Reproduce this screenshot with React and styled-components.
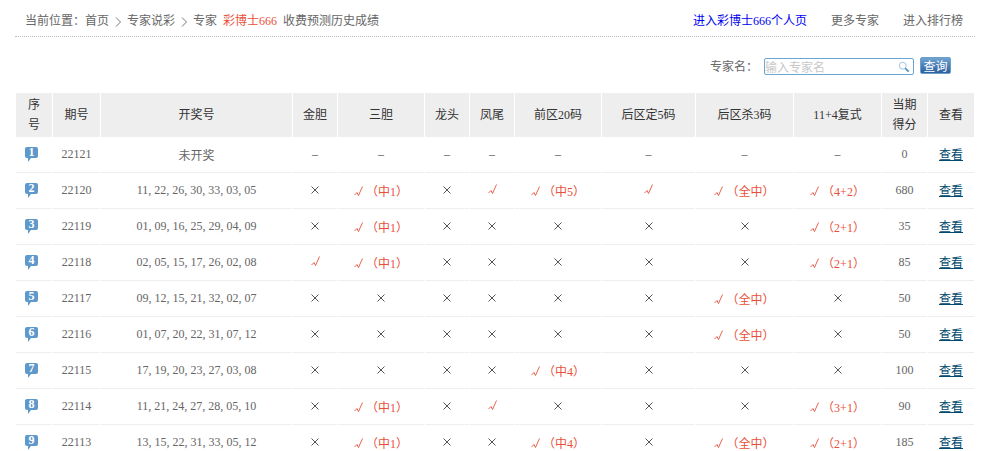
import React from "react";
import styled, { createGlobalStyle } from "styled-components";

const Global = createGlobalStyle`
  html, body { margin: 0; padding: 0; height: 451px; overflow: hidden; background: #fff; }
  body { font: 12px "Liberation Serif", "Noto Sans CJK SC", sans-serif; color: #666; }
`;

const Page = styled.div`
  width: 960px;
  margin-left: 15px;
`;

const TopBar = styled.div`
  height: 37px;
  box-sizing: border-box;
  padding: 14px 12px 0 10px;
  border-bottom: 1px dotted #bbb;
  display: flex;
  justify-content: space-between;
  align-items: flex-start;
  line-height: 15px;
`;

const Crumbs = styled.div`
  display: flex;
  gap: 6px;
`;

const Location = styled.span`
  margin-right: -6px;
`;

const Sep = styled.span`
  width: 6px;
  height: 15px;
  display: flex;
  justify-content: center;
  align-items: center;
`;

const Red = styled.span`
  color: #e8503a;
`;

const TopLinks = styled.div`
  display: flex;
  gap: 24px;
`;

const TopLink = styled.a`
  color: ${(p) => (p.$active ? "#0000f0" : "#666")};
  text-decoration: none;
`;

const SearchRow = styled.div`
  height: 56px;
  box-sizing: border-box;
  padding: 20px 24px 0 0;
  display: flex;
  justify-content: flex-end;
  align-items: flex-start;
`;

const SearchLabel = styled.label`
  line-height: 18px;
  margin-top: 1px;
  margin-right: 6px;
  white-space: nowrap;
`;

const SearchBox = styled.div`
  width: 150px;
  height: 17px;
  margin-top: 1px;
  box-sizing: border-box;
  border: 1px solid #6aa6d3;
  border-radius: 2px;
  display: flex;
  align-items: center;
  padding-right: 3px;
`;

const SearchInput = styled.input`
  flex: 1;
  min-width: 0;
  border: 0;
  outline: 0;
  padding: 0;
  margin: 0;
  height: 15px;
  background: transparent;
  font: 12px "Noto Sans CJK SC", sans-serif;
  &::placeholder {
    color: #c8c8c8;
    opacity: 1;
  }
`;

const SearchButton = styled.button`
  width: 31px;
  height: 17px;
  margin-left: 6px;
  padding: 0;
  border: 1px solid #6a9fca;
  border-radius: 2px;
  background: linear-gradient(#6fa3d0, #2c5f9c);
  color: #fff;
  font: 12px/14px "Noto Sans CJK SC", sans-serif;
`;

const Table = styled.table`
  width: 960px;
  table-layout: fixed;
  border-collapse: separate;
  border-spacing: 1px 0;
`;

const Th = styled.th`
  height: 44px;
  padding: 0;
  background: #eee;
  color: #333;
  font-weight: normal;
  line-height: 20px;
`;

const Td = styled.td`
  height: 36px;
  box-sizing: border-box;
  padding: 0;
  text-align: center;
  border-bottom: 1px solid #eee;
`;

const Comma = styled.span`
  margin-right: 3px;
`;

const Bubble = styled.span`
  position: relative;
  display: block;
  width: 13px;
  height: 11px;
  margin: 0 0 4px 9px;
  border-radius: 2px;
  background: #5f98ca;
  color: #fff;
  font: bold 12px/11px "Liberation Serif", serif;
  text-align: center;
  &::after {
    content: "";
    position: absolute;
    left: 3px;
    top: 11px;
    border-style: solid;
    border-width: 4px 3px 0 0;
    border-color: #5f98ca transparent transparent transparent;
  }
`;

const Mark = styled.svg`
  display: inline-block;
  vertical-align: 0;
  fill: none;
`;

const Hit = styled.span`
  color: #e8503a;
  white-space: nowrap;
`;

const CheckGap = styled.span`
  margin-left: 3px;
`;

const ViewLink = styled.a`
  color: #004a6e;
  text-decoration: underline;
  font-family: "Noto Sans CJK SC", sans-serif;
  vertical-align: 1px;
`;

const Dash = styled.span`
  color: #555;
`;

const Check = () => (
  <Mark width="9" height="10" viewBox="0 0 9 10" stroke="#e8503a" strokeWidth="0.9">
    <polyline points="0.5,9 3,6.5 4.5,9.5 8.5,0.5" />
  </Mark>
);

const Cross = () => (
  <Mark width="8" height="8" viewBox="0 0 8 8" stroke="#555">
    <path d="M0.5 0.5 L7.5 7.5 M7.5 0.5 L0.5 7.5" />
  </Mark>
);

const columns = [36, 47, 191, 44, 86, 44, 44, 86, 93, 97, 87, 45, 46];
const headers = [
  ["序", "号"], ["期号"], ["开奖号"], ["金胆"], ["三胆"], ["龙头"], ["凤尾"],
  ["前区20码"], ["后区定5码"], ["后区杀3码"], ["11+4复式"], ["当期", "得分"], ["查看"],
];

const X = "x";
const D = "-";
const rows = [
  ["22121", "未开奖", [D, D, D, D, D, D, D, D], "0"],
  ["22120", "11,22,26,30,33,03,05", [X, "（中1）", X, "", "（中5）", "", "（全中）", "（4+2）"], "680"],
  ["22119", "01,09,16,25,29,04,09", [X, "（中1）", X, X, X, X, X, "（2+1）"], "35"],
  ["22118", "02,05,15,17,26,02,08", ["", "（中1）", X, X, X, X, X, "（2+1）"], "85"],
  ["22117", "09,12,15,21,32,02,07", [X, X, X, X, X, X, "（全中）", X], "50"],
  ["22116", "01,07,20,22,31,07,12", [X, X, X, X, X, X, "（全中）", X], "50"],
  ["22115", "17,19,20,23,27,03,08", [X, X, X, X, "（中4）", X, X, X], "100"],
  ["22114", "11,21,24,27,28,05,10", [X, "（中1）", X, "", X, X, X, "（3+1）"], "90"],
  ["22113", "13,15,22,31,33,05,12", [X, "（中1）", X, X, "（中4）", X, "（全中）", "（2+1）"], "185"],
];

const Numbers = ({ value }) =>
  value.split(",").map((n, i, all) => (
    <React.Fragment key={i}>
      {n}
      {i < all.length - 1 && <Comma>,</Comma>}
    </React.Fragment>
  ));

const Result = ({ value }) => {
  if (value === X) return <Cross />;
  if (value === D) return <Dash>–</Dash>;
  return (
    <Hit>
      <Check />
      {value && <CheckGap>{value}</CheckGap>}
    </Hit>
  );
};

const Chevron = () => (
  <Sep>
    <svg width="6" height="10" viewBox="0 0 6 10" fill="none" stroke="#777">
      <path d="M1 0.5 L5.5 5 L1 9.5" />
    </svg>
  </Sep>
);

export default function App() {
  return (
    <Page>
      <Global />
      <TopBar>
        <Crumbs>
          <Location>当前位置：</Location>
          <span>首页</span>
          <Chevron />
          <span>专家说彩</span>
          <Chevron />
          <span>专家</span>
          <Red>彩博士666</Red>
          <span>收费预测历史成绩</span>
        </Crumbs>
        <TopLinks>
          <TopLink $active href="#">进入彩博士666个人页</TopLink>
          <TopLink href="#">更多专家</TopLink>
          <TopLink href="#">进入排行榜</TopLink>
        </TopLinks>
      </TopBar>
      <SearchRow>
        <SearchLabel>专家名：</SearchLabel>
        <SearchBox>
          <SearchInput placeholder="输入专家名" />
          <svg width="12" height="12" viewBox="0 0 14 14" fill="none">
            <circle cx="5.5" cy="5.5" r="4" stroke="#8fb8d8" />
            <path d="M8.5 8.5 L12.5 12.5" stroke="#4f8fc0" strokeWidth="2" />
          </svg>
        </SearchBox>
        <SearchButton>查询</SearchButton>
      </SearchRow>
      <Table>
        <colgroup>
          {columns.map((w, i) => (
            <col key={i} width={w} />
          ))}
        </colgroup>
        <thead>
          <tr>
            {headers.map((lines, i) => (
              <Th key={i}>
                {lines.map((line, j) => (
                  <React.Fragment key={j}>
                    {j > 0 && <br />}
                    {line}
                  </React.Fragment>
                ))}
              </Th>
            ))}
          </tr>
        </thead>
        <tbody>
          {rows.map(([issue, numbers, results, score], i) => (
            <tr key={issue}>
              <Td>
                <Bubble>{i + 1}</Bubble>
              </Td>
              <Td>{issue}</Td>
              <Td>{i === 0 ? numbers : <Numbers value={numbers} />}</Td>
              {results.map((r, j) => (
                <Td key={j}>
                  <Result value={r} />
                </Td>
              ))}
              <Td>{score}</Td>
              <Td>
                <ViewLink href="#">查看</ViewLink>
              </Td>
            </tr>
          ))}
        </tbody>
      </Table>
    </Page>
  );
}
